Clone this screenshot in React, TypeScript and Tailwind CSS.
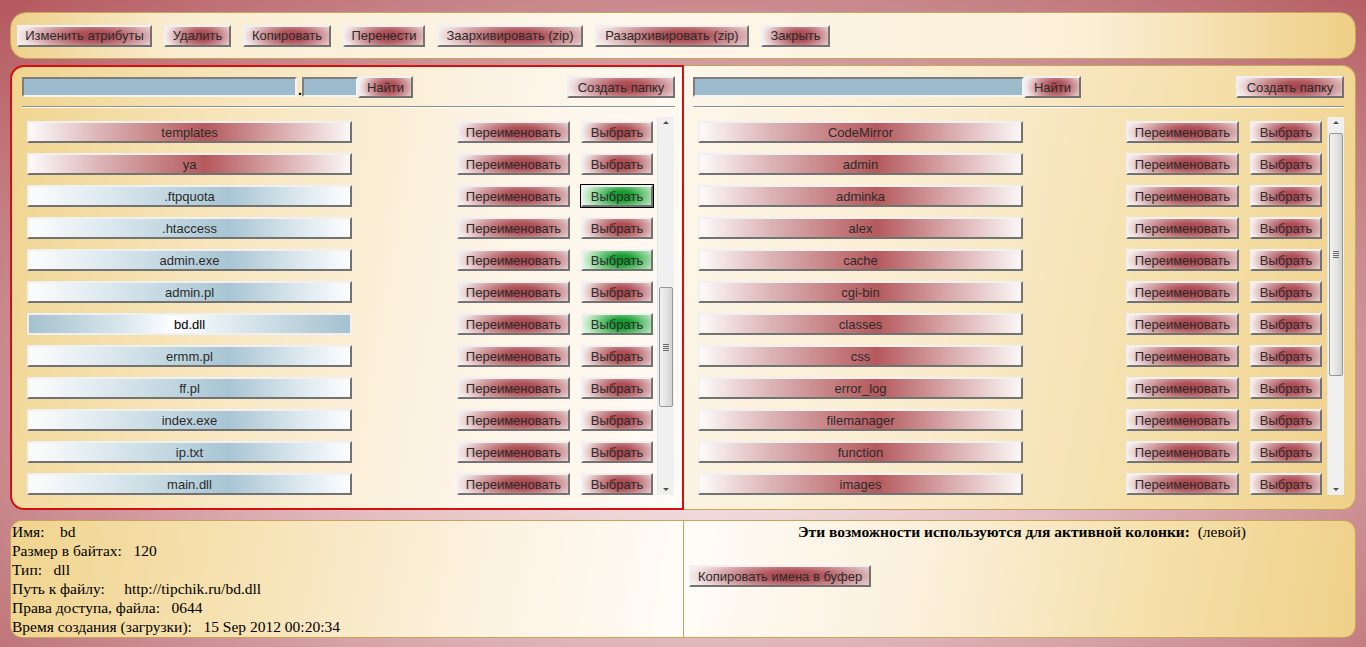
import React from 'react';

const BTN =
  "h-[22px] shrink-0 text-[13px] leading-none text-[#2b2b2b] font-['Liberation_Sans',Arial,sans-serif] border-[2px] border-t-[#f0f0f0] border-l-[#f0f0f0] border-b-[#727272] border-r-[#727272] flex items-center justify-center whitespace-nowrap";
const RED =
  'bg-[radial-gradient(ellipse_65%_120%_at_57%_50%,#a6434a_0%,#b1555c_25%,#cf979a_55%,#f1e1e2_85%,#fdfafa_100%)]';
const GREEN =
  'bg-[radial-gradient(ellipse_65%_120%_at_57%_50%,#0c8c26_0%,#22a03a_25%,#7fcd8b_55%,#d3efd6_85%,#f0faf1_100%)]';
const DIR =
  'bg-[linear-gradient(to_right,#fdfafa_0%,#dcb4b5_22%,#b5595d_55%,#dcb1b3_80%,#fbf7f7_100%)]';
const FILE =
  'bg-[linear-gradient(to_right,#fbfdfe_0%,#dbe8ee_25%,#a8c5d3_62%,#dde9ef_85%,#fbfdfe_100%)]';
const SEL =
  'bg-[linear-gradient(to_right,#a4c1cf_0%,#dbe8ee_30%,#fdfeff_45%,#dce8ee_65%,#a4c1cf_100%)]';

const INPUT =
  'h-[20px] bg-[#9cbccd] border-[2px] border-t-[#7e7e7e] border-l-[#7e7e7e] border-b-[#f4f4f4] border-r-[#f4f4f4]';

type Item = { name: string; kind: 'dir' | 'file' | 'sel'; green?: boolean; focus?: boolean };

const leftItems: Item[] = [
  { name: 'templates', kind: 'dir' },
  { name: 'ya', kind: 'dir' },
  { name: '.ftpquota', kind: 'file', green: true, focus: true },
  { name: '.htaccess', kind: 'file' },
  { name: 'admin.exe', kind: 'file', green: true },
  { name: 'admin.pl', kind: 'file' },
  { name: 'bd.dll', kind: 'sel', green: true },
  { name: 'ermm.pl', kind: 'file' },
  { name: 'ff.pl', kind: 'file' },
  { name: 'index.exe', kind: 'file' },
  { name: 'ip.txt', kind: 'file' },
  { name: 'main.dll', kind: 'file' },
];

const rightItems: Item[] = [
  'CodeMirror',
  'admin',
  'adminka',
  'alex',
  'cache',
  'cgi-bin',
  'classes',
  'css',
  'error_log',
  'filemanager',
  'function',
  'images',
].map((n) => ({ name: n, kind: 'dir' as const }));

function Row({ item }: { item: Item }) {
  const bg = item.kind === 'dir' ? DIR : item.kind === 'sel' ? SEL : FILE;
  const border =
    item.kind === 'sel'
      ? 'border-t-[#6f6f6f] border-l-[#6f6f6f] border-b-[#f0f0f0] border-r-[#f0f0f0] text-black'
      : '';
  return (
    <div className="flex items-center h-[22px]">
      <button className={`${BTN} ${bg} ${border} ml-[5px] w-[325px]`}>{item.name}</button>
      <button className={`${BTN} ${RED} ml-auto w-[113px]`}>Переименовать</button>
      <button
        className={`${BTN} ${item.green ? GREEN : RED} ml-[11px] w-[72px] ${
          item.focus ? 'outline outline-black' : ''
        }`}
      >
        Выбрать
      </button>
    </div>
  );
}

function Scrollbar({ top, height }: { top: number; height: number }) {
  return (
    <div className="relative w-[17px] h-full bg-[#f0f0f0] border-l border-[#e6e6e6] shrink-0">
      <div className="absolute top-[4px] left-0 right-0 flex justify-center">
        <div className="w-0 h-0 border-l-[3px] border-r-[3px] border-b-[3px] border-l-transparent border-r-transparent border-b-[#505050]" />
      </div>
      <div
        className="absolute left-[1px] right-[1px] rounded-[2px] border border-[#979797] bg-[linear-gradient(to_right,#f2f2f2,#e2e2e2_60%,#d2d2d2)] flex items-center justify-center"
        style={{ top, height }}
      >
        <div className="flex flex-col gap-[1px]">
          <div className="w-[6px] h-[1px] bg-[#6a6a6a]" />
          <div className="w-[6px] h-[1px] bg-[#6a6a6a]" />
          <div className="w-[6px] h-[1px] bg-[#6a6a6a]" />
          <div className="w-[6px] h-[1px] bg-[#6a6a6a]" />
        </div>
      </div>
      <div className="absolute bottom-[4px] left-0 right-0 flex justify-center">
        <div className="w-0 h-0 border-l-[3px] border-r-[3px] border-t-[3px] border-l-transparent border-r-transparent border-t-[#505050]" />
      </div>
    </div>
  );
}

export default function App() {
  const tools: [string, string][] = [
    ['Изменить атрибуты', 'w-[135px]'],
    ['Удалить', 'w-[67px]'],
    ['Копировать', 'w-[88px]'],
    ['Перенести', 'w-[82px]'],
    ['Заархивировать (zip)', 'w-[146px]'],
    ['Разархивировать (zip)', 'w-[154px]'],
    ['Закрыть', 'w-[69px]'],
  ];

  return (
    <div className="w-[1366px] h-[647px] overflow-hidden px-[10px] pt-[12px] bg-[radial-gradient(ellipse_at_52%_62%,#fbf3f3_0%,#e7c4c6_35%,#c98b8f_70%,#b4585d_100%)] font-['Liberation_Sans',Arial,sans-serif]">
      {/* toolbar */}
      <div className="h-[47px] rounded-[16px] border border-[#c6a45c] flex items-center gap-[12px] pl-[6px] bg-[linear-gradient(to_right,#efd18c_0%,#f9ecd0_12%,#fdf7ec_45%,#fbefd6_80%,#efcf86_100%)]">
        {tools.map(([t, w]) => (
          <button key={t} className={`${BTN} ${RED} ${w} h-[21px]`}>
            {t}
          </button>
        ))}
      </div>

      {/* panels */}
      <div className="flex mt-[6px] h-[445px]">
        <div className="w-[674px] shrink-0 rounded-l-[14px] border-[2px] border-[#d40f0f] pt-[9px] pl-[10px] pr-[7px] flex flex-col bg-[linear-gradient(100deg,#f0d48e_0%,#f7e5bb_30%,#fcf3e4_65%,#fffbf6_100%)]">
          <div className="flex items-center h-[22px]">
            <div className={`${INPUT} w-[275px]`} />
            <span className="w-[5px] text-[14px] font-bold leading-none text-black pt-[6px] pl-[1px]">.</span>
            <div className={`${INPUT} w-[56px]`} />
            <button className={`${BTN} ${RED} w-[55px]`}>Найти</button>
            <button className={`${BTN} ${RED} w-[108px] ml-auto`}>Создать папку</button>
          </div>
          <div className="mt-[8px] border-t border-t-[#8d8d8d] border-b border-b-white" />
          <div className="mt-[9px] h-[378px] flex">
            <div className="flex-1 flex flex-col gap-[10px] pt-[4px]">
              {leftItems.map((it) => (
                <Row key={it.name} item={it} />
              ))}
            </div>
            <div className="ml-[4px] mr-[1px] h-full">
              <Scrollbar top={170} height={120} />
            </div>
          </div>
        </div>

        <div className="flex-1 rounded-r-[14px] border border-[#c6a45c] border-l-0 pt-[10px] pl-[9px] pr-[11px] flex flex-col bg-[linear-gradient(100deg,#fdf6ea_0%,#f9ebcc_40%,#f4dea6_75%,#efd08a_100%)]">
          <div className="flex items-center h-[22px]">
            <div className={`${INPUT} w-[331px]`} />
            <button className={`${BTN} ${RED} w-[57px]`}>Найти</button>
            <button className={`${BTN} ${RED} w-[108px] ml-auto`}>Создать папку</button>
          </div>
          <div className="mt-[8px] border-t border-t-[#8d8d8d] border-b border-b-white" />
          <div className="mt-[9px] h-[378px] flex">
            <div className="flex-1 flex flex-col gap-[10px] pt-[4px]">
              {rightItems.map((it) => (
                <Row key={it.name} item={it} />
              ))}
            </div>
            <div className="ml-[5px] h-full">
              <Scrollbar top={16} height={243} />
            </div>
          </div>
        </div>
      </div>

      {/* info */}
      <div className="mt-[10px] h-[118px] flex rounded-[12px] border border-[#c6a45c] overflow-hidden font-['Liberation_Serif','Times_New_Roman',serif] text-[15.5px] leading-[19px] text-black">
        <div className="w-[673px] shrink-0 border-r border-[#c6a45c] pl-[1px] pt-[1px] whitespace-pre bg-[linear-gradient(100deg,#f0d48e_0%,#f6e2b4_35%,#fcf2e0_70%,#fffcf8_100%)]">
          <div>Имя:    bd</div>
          <div>Размер в байтах:   120</div>
          <div>Тип:   dll</div>
          <div>Путь к файлу:     http://tipchik.ru/bd.dll</div>
          <div>Права доступа, файла:   0644</div>
          <div>Время создания (загрузки):   15 Sep 2012 00:20:34</div>
        </div>
        <div className="flex-1 pt-[1px] pl-[5px] bg-[linear-gradient(100deg,#fffcf8_0%,#fbf0dc_35%,#f5e0aa_70%,#efd088_100%)]">
          <div className="text-center">
            <span className="font-bold">Эти возможности используются для активной колонки:</span>
            <span className="whitespace-pre">  (левой)</span>
          </div>
          <button className={`${BTN} ${RED} w-[182px] mt-[24px]`}>Копировать имена в буфер</button>
        </div>
      </div>
    </div>
  );
}
